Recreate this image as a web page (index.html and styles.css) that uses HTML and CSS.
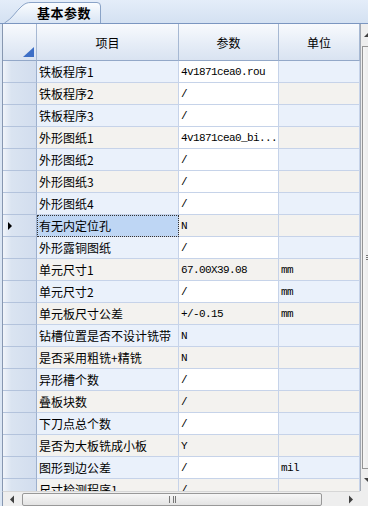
FILE: index.html
```html
<!DOCTYPE html>
<html lang="zh">
<head>
    <meta charset="UTF-8">
    <title>基本参数</title>
    <link rel="stylesheet" href="styles.css">
</head>
<body>

    <div class="tabs">
        <div class="tab">
            <svg class="tab-bg" width="98" height="22" viewBox="0 0 98 22">
                <defs>
                    <linearGradient id="tabfill" x1="0" y1="0" x2="0" y2="1">
                        <stop offset="0" stop-color="#fbfdff"/>
                        <stop offset="1" stop-color="#d9e5f4"/>
                    </linearGradient>
                </defs>
                <path d="M0.5,22 C8,18 12,10 18,5 C21,2.5 23,1.5 27,1.5 L93,1.5 Q96.5,1.5 96.5,5 L96.5,22" fill="url(#tabfill)" stroke="#8aa3c7"/>
            </svg>
            <span>基本参数</span>
        </div>
    </div>

    <div class="panel">
        <div class="grid">
            <div class="row head">
                <div class="rh corner"><span class="corner-mark"></span></div>
                <div class="ch">项目</div>
                <div class="ch">参数</div>
                <div class="ch">单位</div>
            </div>

            <div class="row odd"><div class="rh"></div><div class="c">铁板程序1</div><div class="c v">4v1871cea0.rou</div><div class="c u"></div></div>
            <div class="row even"><div class="rh"></div><div class="c">铁板程序2</div><div class="c v">/</div><div class="c u"></div></div>
            <div class="row odd"><div class="rh"></div><div class="c">铁板程序3</div><div class="c v">/</div><div class="c u"></div></div>
            <div class="row even"><div class="rh"></div><div class="c">外形图纸1</div><div class="c v">4v1871cea0_bi...</div><div class="c u"></div></div>
            <div class="row odd"><div class="rh"></div><div class="c">外形图纸2</div><div class="c v">/</div><div class="c u"></div></div>
            <div class="row even"><div class="rh"></div><div class="c">外形图纸3</div><div class="c v">/</div><div class="c u"></div></div>
            <div class="row odd"><div class="rh"></div><div class="c">外形图纸4</div><div class="c v">/</div><div class="c u"></div></div>
            <div class="row even current"><div class="rh"><span class="marker"></span></div><div class="c selected">有无内定位孔</div><div class="c v ro">N</div><div class="c u"></div></div>
            <div class="row odd"><div class="rh"></div><div class="c">外形露铜图纸</div><div class="c v">/</div><div class="c u"></div></div>
            <div class="row even"><div class="rh"></div><div class="c">单元尺寸1</div><div class="c v ro">67.00X39.08</div><div class="c u">mm</div></div>
            <div class="row odd"><div class="rh"></div><div class="c">单元尺寸2</div><div class="c v">/</div><div class="c u">mm</div></div>
            <div class="row even"><div class="rh"></div><div class="c">单元板尺寸公差</div><div class="c v ro">+/-0.15</div><div class="c u">mm</div></div>
            <div class="row odd"><div class="rh"></div><div class="c">钻槽位置是否不设计铣带</div><div class="c v ro">N</div><div class="c u"></div></div>
            <div class="row even"><div class="rh"></div><div class="c">是否采用粗铣+精铣</div><div class="c v ro">N</div><div class="c u"></div></div>
            <div class="row odd"><div class="rh"></div><div class="c">异形槽个数</div><div class="c v">/</div><div class="c u"></div></div>
            <div class="row even"><div class="rh"></div><div class="c">叠板块数</div><div class="c v ro">/</div><div class="c u"></div></div>
            <div class="row odd"><div class="rh"></div><div class="c">下刀点总个数</div><div class="c v">/</div><div class="c u"></div></div>
            <div class="row even"><div class="rh"></div><div class="c">是否为大板铣成小板</div><div class="c v ro">Y</div><div class="c u"></div></div>
            <div class="row odd"><div class="rh"></div><div class="c">图形到边公差</div><div class="c v">/</div><div class="c u">mil</div></div>
            <div class="row even"><div class="rh"></div><div class="c">尺寸检测程序1</div><div class="c v ro">/</div><div class="c u"></div></div>
        </div>

        <div class="vscroll">
            <div class="vbtn">
                <svg width="8" height="6" viewBox="0 0 8 6"><polygon points="5,1 1,5 9,5" fill="#404040"/></svg>
            </div>
            <div class="vthumb"><span class="vgrip"></span></div>
            <div class="vbtn">
                <svg width="8" height="6" viewBox="0 0 8 6"><polygon points="1,1 9,1 5,5" fill="#404040"/></svg>
            </div>
        </div>

        <div class="hscroll">
            <div class="hbtn">
                <svg width="6" height="9" viewBox="0 0 6 9"><polygon points="5,0.5 5,8.5 1,4.5" fill="#404040"/></svg>
            </div>
            <div class="htrack">
                <div class="hthumb"><span class="hgrip"></span></div>
            </div>
            <div class="hbtn">
                <svg width="6" height="9" viewBox="0 0 6 9"><polygon points="1,0.5 1,8.5 5,4.5" fill="#404040"/></svg>
            </div>
        </div>
        <div class="sizer"></div>
    </div>

</body>
</html>
```

FILE: styles.css
```css
* {
    box-sizing: border-box;
}

body {
    margin: 0;
    width: 368px;
    height: 506px;
    overflow: hidden;
    display: flex;
    flex-direction: column;
    font-family: "Noto Sans CJK SC", "Liberation Sans", sans-serif;
    font-size: 12px;
    color: #000;
    background: #dbe6f4;
}

/* Onglets */
.tabs {
    height: 24px;
    flex: none;
    display: flex;
    align-items: flex-end;
    padding-left: 4px;
    border-bottom: 1px solid #7b96c0;
    background: linear-gradient(#e4edf9, #d4e1f2);
}

.tab {
    position: relative;
    width: 98px;
    height: 22px;
    display: flex;
    align-items: center;
    padding-left: 33px;
    font-size: 13px;
    font-weight: bold;
}

.tab-bg {
    position: absolute;
    left: 0;
    top: 0;
}

.tab span {
    position: relative;
    letter-spacing: 0.5px;
}

/* Zone de la grille */
.panel {
    flex: 1;
    min-height: 0;
    display: grid;
    grid-template-columns: 358px 1fr;
    grid-template-rows: 1fr 15px;
    padding-left: 2px;
    background: #dbe6f4;
}

.grid {
    overflow: hidden;
    border-left: 1px solid #8797b0;
    background: #fff;
}

.row {
    display: grid;
    grid-template-columns: 34px 142px 100px 81px;
    height: 22px;
}

.row.head {
    height: 37px;
}

.rh {
    display: flex;
    align-items: center;
    padding-left: 3px;
    border-right: 1px solid #9db0cd;
    border-bottom: 1px solid #b3c3dc;
    background: linear-gradient(to right, #f0f4fa, #dae4f1 25%, #d2ddee);
}

.head .rh,
.ch {
    border-right: 1px solid #a6b8d3;
    border-bottom: 1px solid #93a8c8;
    background: linear-gradient(#f8fafd, #e6edf7 55%, #d9e3f1);
}

.ch {
    display: flex;
    align-items: center;
    justify-content: center;
    font-size: 12px;
}

.corner {
    position: relative;
}

.corner-mark {
    position: absolute;
    right: 2px;
    bottom: 3px;
    width: 0;
    height: 0;
    border-left: 11px solid transparent;
    border-bottom: 10px solid #3d6fc6;
}

.marker {
    width: 0;
    height: 0;
    border-top: 4px solid transparent;
    border-bottom: 4px solid transparent;
    border-left: 4px solid #000;
    margin-left: 2px;
}

.c {
    display: flex;
    align-items: center;
    padding-left: 2px;
    white-space: nowrap;
    overflow: hidden;
    border-right: 1px solid #c6d3e9;
    border-bottom: 1px solid #c6d3e9;
}

.odd .c {
    background: #eaf1fb;
}

.even .c {
    background: #f3f2ef;
}

.odd .c.v,
.even .c.v {
    background: #fff;
}

.odd .c.v.ro {
    background: #eaf1fb;
}

.even .c.v.ro {
    background: #f3f2ef;
}

.c.v,
.c.u {
    padding-left: 2px;
    font-family: "Liberation Mono", "DejaVu Sans Mono", monospace;
    font-size: 11px;
    letter-spacing: -0.6px;
}

.c.selected {
    background: #bed6f4;
    outline: 1px dotted #333;
    outline-offset: -1px;
}

/* Barres de défilement */
.vscroll {
    display: flex;
    flex-direction: column;
    border-left: 1px solid #a3a9b3;
    background: #eeeeee;
}

.vbtn {
    height: 22px;
    flex: none;
    display: flex;
    align-items: center;
    padding-left: 2px;
}

.vthumb {
    flex: 1;
    margin-left: 1px;
    display: flex;
    align-items: center;
    border-left: 1px solid #959595;
    border-top: 1px solid #959595;
    border-bottom: 1px solid #959595;
    background: linear-gradient(to right, #f6f6f6, #e4e4e4);
}

.vgrip {
    width: 6px;
    height: 5px;
    margin-left: 3px;
    border-top: 1px solid #777;
    border-bottom: 1px solid #777;
    background: linear-gradient(transparent 1px, #777 1px, #777 2px, transparent 2px);
}

.hscroll {
    display: flex;
    border-left: 1px solid #8797b0;
    border-top: 1px solid #d6d6d6;
    background: #eeeeee;
}

.hbtn {
    width: 18px;
    flex: none;
    display: flex;
    align-items: center;
    justify-content: center;
}

.htrack {
    flex: 1;
    display: flex;
    padding: 1px 0 0 1px;
}

.hthumb {
    width: 300px;
    display: flex;
    align-items: center;
    justify-content: center;
    border: 1px solid #989898;
    border-radius: 2px;
    background: linear-gradient(#f7f7f7, #e3e3e3);
}

.hgrip {
    width: 7px;
    height: 7px;
    border-left: 1px solid #777;
    border-right: 1px solid #777;
    background: linear-gradient(to right, transparent 3px, #777 3px, #777 4px, transparent 4px);
}

.sizer {
    background: #eeeeee;
}
```
